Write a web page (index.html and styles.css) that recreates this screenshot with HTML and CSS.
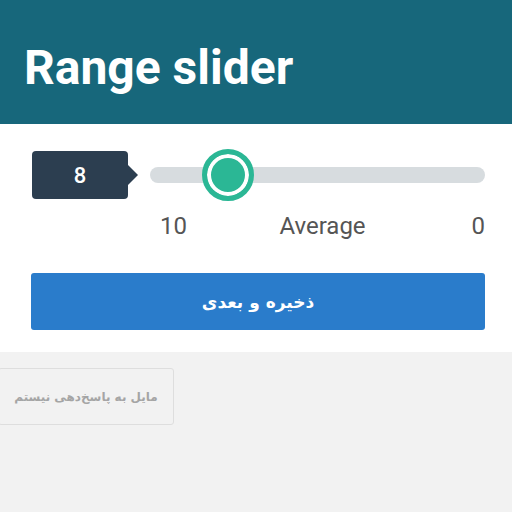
FILE: index.html
```html
<!DOCTYPE html>
<html lang="en">
<head>
<meta charset="utf-8">
<link rel="stylesheet" href="styles.css">
</head>
<body>
<header class="header">
  <h1 class="title">Range slider</h1>
</header>
<section class="card">
  <div class="slider-row">
    <div class="bubble">8</div>
    <div class="track">
      <div class="thumb"></div>
    </div>
  </div>
  <div class="labels">
    <span class="lab-left">10</span>
    <span class="lab-mid">Average</span>
    <span class="lab-right">0</span>
  </div>
  <button class="primary" dir="rtl">ذخیره و بعدی</button>
</section>
<section class="footer">
  <button class="secondary" dir="rtl">مایل به پاسخ‌دهی نیستم</button>
</section>
</body>
</html>
```
FILE: styles.css
```css
* { box-sizing: border-box; }
html, body { margin: 0; padding: 0; }
body {
  width: 512px;
  height: 512px;
  overflow: hidden;
  background: #f2f2f2;
  font-family: Roboto, "Liberation Sans", sans-serif;
}
.header {
  height: 124px;
  background: #17677b;
  display: flex;
  align-items: center;
  padding: 12px 0 0 24px;
}
.title {
  margin: 0;
  color: #fff;
  font-size: 48px;
  font-weight: 700;
  line-height: 1;
}
.card {
  background: #fff;
  height: 228px;
  padding: 27px 27px 0 32px;
}
.slider-row {
  display: flex;
  align-items: center;
  height: 48px;
}
.bubble {
  position: relative;
  width: 96px;
  height: 48px;
  background: #2c3e50;
  border-radius: 4px;
  color: #fff;
  font-size: 22px;
  font-weight: 500;
  display: flex;
  align-items: center;
  justify-content: center;
}
.bubble::after {
  content: "";
  position: absolute;
  right: -10px;
  top: 50%;
  margin-top: -10px;
  border-left: 10px solid #2c3e50;
  border-top: 10px solid transparent;
  border-bottom: 10px solid transparent;
}
.track {
  position: relative;
  flex: 1;
  margin-left: 22px;
  height: 16px;
  border-radius: 8px;
  background: #d7dcdf;
}
.thumb {
  position: absolute;
  left: 52px;
  top: -18px;
  width: 52px;
  height: 52px;
  border-radius: 50%;
  background: #2bb795;
  border: 5px solid #2bb795;
  box-shadow: inset 0 0 0 4px #fff;
}
.labels {
  display: grid;
  grid-template-columns: 1fr auto 1fr;
  margin: 13px 0 0 128px;
  font-size: 24px;
  color: #555;
  line-height: 28px;
}
.lab-left { justify-self: start; }
.lab-right { justify-self: end; }
.primary {
  display: block;
  width: 454px;
  height: 57px;
  margin-top: 33px;
  margin-left: -1px;
  border: none;
  border-radius: 3px;
  background: #2a7ccb;
  color: #fff;
  font-family: "DejaVu Sans", sans-serif;
  font-size: 17px;
  font-weight: 700;
}
.footer {
  padding-top: 16px;
}
.secondary {
  display: block;
  margin-left: -2px;
  width: 176px;
  height: 57px;
  border: 1px solid #dedede;
  border-radius: 3px;
  background: #f2f2f2;
  color: #a5a5a5;
  font-family: "DejaVu Sans", sans-serif;
  font-size: 12px;
  font-weight: 700;
}
```
